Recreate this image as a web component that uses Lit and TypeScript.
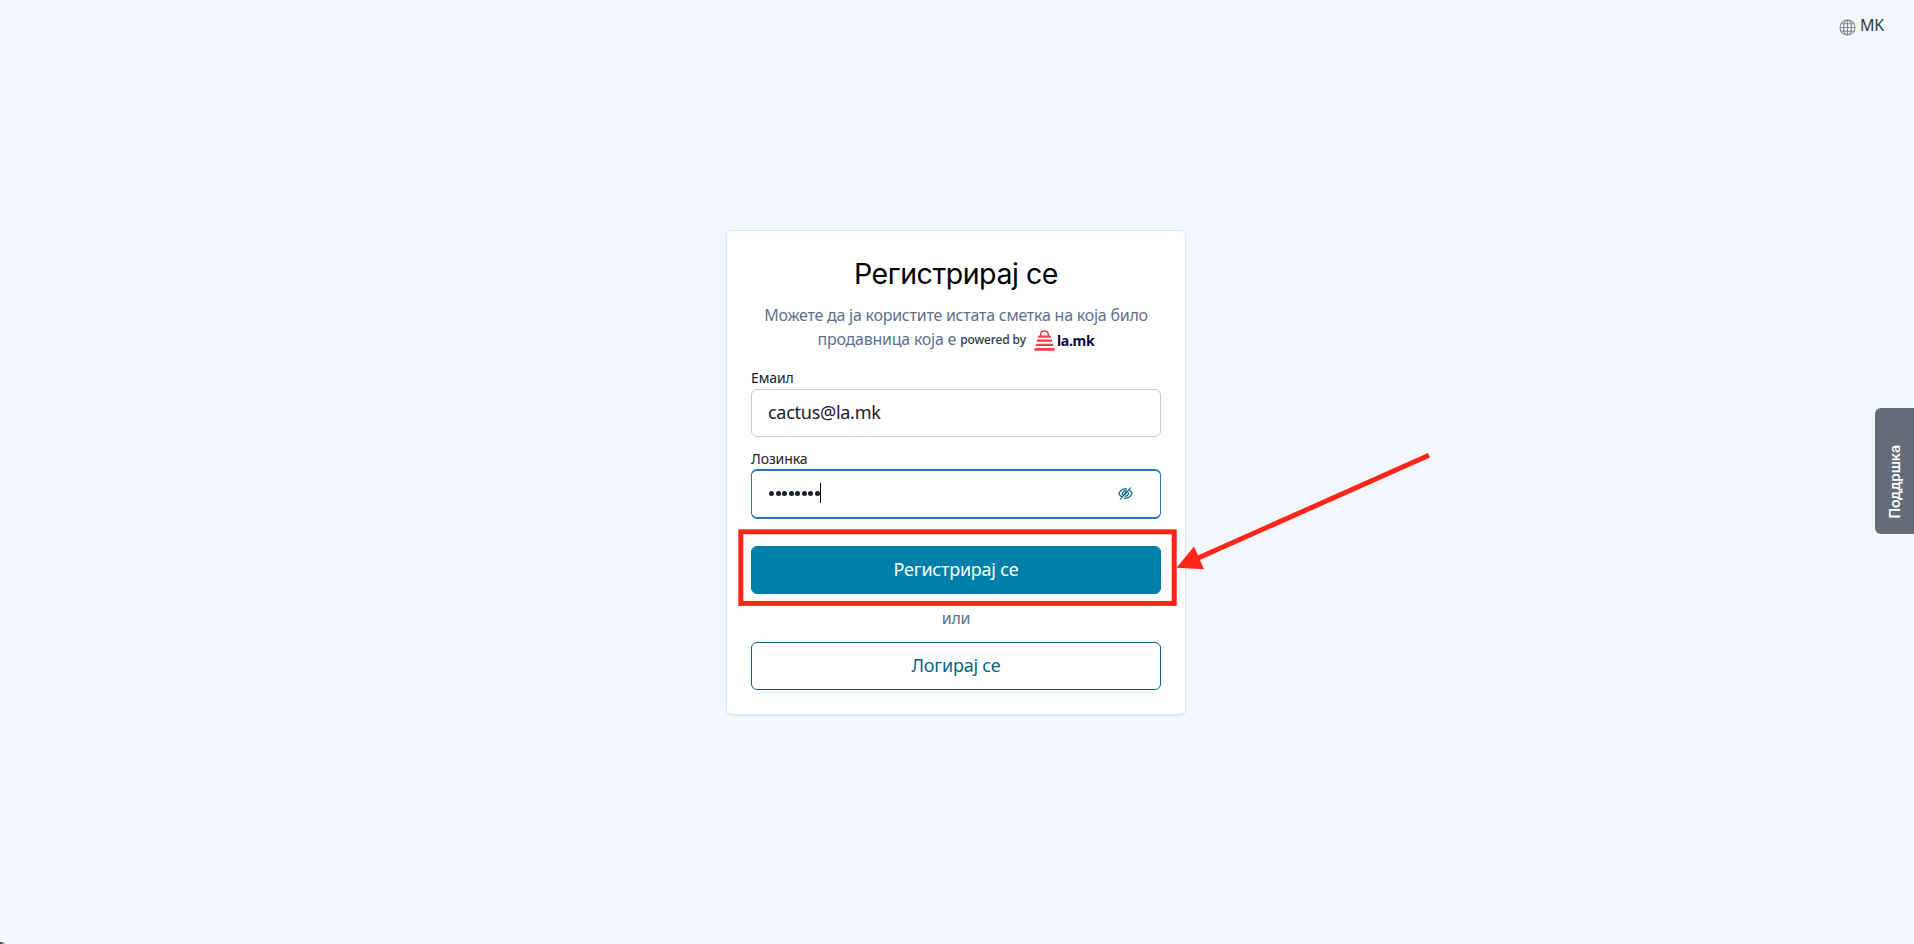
import { LitElement, html, css } from "lit";
import { customElement } from "lit/decorators.js";

@customElement("app-root")
export class AppRoot extends LitElement {
  static styles = css`
    :host {
      display: block;
      position: relative;
      height: 944px;
      overflow: hidden;
      background: #f4f7fe;
      font-family: "Noto Sans", sans-serif;
      color: #1a202c;
    }
    * { box-sizing: border-box; }
    .top {
      height: 230px;
      display: flex;
      justify-content: flex-end;
      align-items: flex-start;
      padding: 13px 30px 0 0;
    }
    .lang {
      display: flex;
      gap: 4px;
      font-size: 16px;
      line-height: 24px;
      color: #2d3f47;
      letter-spacing: -0.2px;
    }
    .globe { width: 17px; height: 17px; margin-top: 5.5px; }
    .main { display: flex; justify-content: center; padding-right: 2px; }
    .card {
      width: 460px;
      height: 485px;
      padding: 24px;
      background: #fff;
      border: 1px solid #dce4f0;
      border-radius: 6px;
      box-shadow: 0 1px 2px rgba(40, 70, 120, 0.07);
    }
    h1 {
      margin: 0 0 10px;
      font: 400 28.5px/38px Inter, sans-serif;
      letter-spacing: -0.45px;
      text-align: center;
      color: #000;
    }
    .intro {
      margin: 0 0 16px;
      height: 48px;
      font-size: 16px;
      line-height: 24px;
      letter-spacing: -0.24px;
      text-align: center;
      color: #5d718e;
    }
    .line { display: flex; justify-content: center; white-space: pre; }
    .powered {
      margin-left: 4px;
      font-size: 12px;
      font-weight: 500;
      line-height: 26px;
      letter-spacing: -0.12px;
      color: #2b3d3d;
    }
    .bag { width: 21px; height: 21px; margin: 3px 2px 0 8px; }
    .brand {
      font-size: 14px;
      font-weight: 700;
      line-height: 27px;
      letter-spacing: -0.25px;
      color: #0b0747;
    }
    label { display: block; font-size: 14px; line-height: 22px; letter-spacing: -0.1px; }
    .second { margin-top: 11px; line-height: 21px; }
    .field {
      display: flex;
      align-items: center;
      height: 48px;
      padding: 0 16px 2px;
      border: 1px solid #c0cedd;
      border-radius: 6px;
      font-size: 18px;
      letter-spacing: -0.27px;
    }
    .focus {
      height: 50px;
      padding: 0 27px 2px 17px;
      border: 2px solid #2476c3;
      border-left-width: 1px;
      border-right-width: 1px;
    }
    .dots { display: flex; gap: 1.5px; }
    .dot { width: 5px; height: 5px; border-radius: 50%; background: #1a202c; }
    .caret { width: 1px; height: 20px; margin-left: 0.5px; background: #000; }
    .eye { width: 15px; height: 13px; margin-left: auto; margin-top: 1px; }
    .btn {
      display: flex;
      width: 100%;
      height: 48px;
      align-items: center;
      justify-content: center;
      padding: 0 0 2px;
      border: 1px solid #007faa;
      border-radius: 6px;
      background: #007faa;
      color: #fff;
      font: 400 18px "Noto Sans", sans-serif;
      letter-spacing: -0.22px;
    }
    .register { margin-top: 27px; }
    .outline { background: #fff; color: #056583; border-color: #056583; }
    .or {
      margin: 12px 0;
      font-size: 16px;
      line-height: 24px;
      letter-spacing: -0.3px;
      text-align: center;
      color: #5d6f8c;
    }
    .support {
      position: absolute;
      right: 0;
      top: 408px;
      width: 39px;
      height: 126px;
      display: flex;
      align-items: center;
      padding: 0 0 0 2px;
      background: #666c77;
      border-radius: 6px 0 0 6px;
      color: #fff;
      font: 500 15px/36px Roboto, sans-serif;
      letter-spacing: -0.1px;
    }
    .support span { writing-mode: vertical-rl; transform: rotate(180deg); margin-top: 22px; }
    .marks { position: absolute; left: 0; top: 0; pointer-events: none; }
    .corner {
      position: absolute;
      left: 0;
      top: 942px;
      width: 5px;
      height: 2px;
      background: linear-gradient(90deg, #333, #c5c8ce);
      border-radius: 0 3px 0 0;
    }
  `;

  render() {
    return html`
      <div class="top">
        <div class="lang">
          <svg class="globe" viewBox="0 0 17 17" fill="none" stroke="#85888f" stroke-width="1.1">
            <circle cx="8.5" cy="8.5" r="7.5" />
            <ellipse cx="8.5" cy="8.5" rx="4" ry="7.5" />
            <path d="M8.5 1v15M1 8.5h15M2.2 4.7h12.6M2.2 12.3h12.6" />
          </svg>
          <span>MK</span>
        </div>
      </div>
      <div class="main">
        <div class="card">
          <h1>Регистрирај се</h1>
          <div class="intro">
            <div class="line">Можете да ја користите истата сметка на која било</div>
            <div class="line"><span>продавница која е</span><span class="powered">powered by</span><svg class="bag" viewBox="0 0 21 21"><path d="M6.7 6V4.4Q6.7.9 10.5.9t3.8 3.5V6" fill="none" stroke="#fa3c4c" stroke-width="1.5" /><path d="M5 5.6h11q.8 0 1 .8l.4 1.4H3.6L4 6.4q.2-.8 1-.8zM3.1 9.6h14.8l.5 2.2H2.6zM2 13.8h17l.5 2.2h-18zM.9 18h19.2l.7 2q0 .8-.8.8H1q-.8 0-.8-.8z" fill="#fa3c4c" /></svg><span class="brand">la.mk</span></div>
          </div>
          <label>Емаил</label>
          <div class="field">cactus@la.mk</div>
          <label class="second">Лозинка</label>
          <div class="field focus">
            <div class="dots">${Array.from({ length: 8 }, () => html`<i class="dot"></i>`)}</div>
            <i class="caret"></i>
            <svg class="eye" viewBox="0 0 15 13" fill="none" stroke="#126b86" stroke-width="1.3">
              <path d="M9 2Q3.6 1 .9 6.5q1 2.4 3 3.4M6 11q5.4.9 8.1-4.5-1-2.4-3-3.4" />
              <path d="M4.7 8.4Q3.8 5.6 6 4.2q1.3-.8 2.8-.2M6.6 9q2 .6 3.2-.9.9-1.1.6-2.6" />
              <path d="M6 7.8L9 4.6" stroke-width="1.8" />
              <path d="M2 12.4L12.9.6" stroke-width="1.2" />
            </svg>
          </div>
          <button class="btn register">Регистрирај се</button>
          <div class="or">или</div>
          <button class="btn outline">Логирај се</button>
        </div>
      </div>
      <div class="support"><span>Поддршка</span></div>
      <div class="corner"></div>
      <svg class="marks" width="1914" height="944" viewBox="0 0 1914 944">
        <rect x="740.8" y="531.8" width="433.4" height="71.6" fill="none" stroke="#ff2617" stroke-width="5" />
        <path d="M1429 455.3L1197 558.5" stroke="#ff2617" stroke-width="5" />
        <path d="M1176.5 567.8L1194 546.5L1204 569.2z" fill="#ff2617" />
      </svg>
    `;
  }
}
